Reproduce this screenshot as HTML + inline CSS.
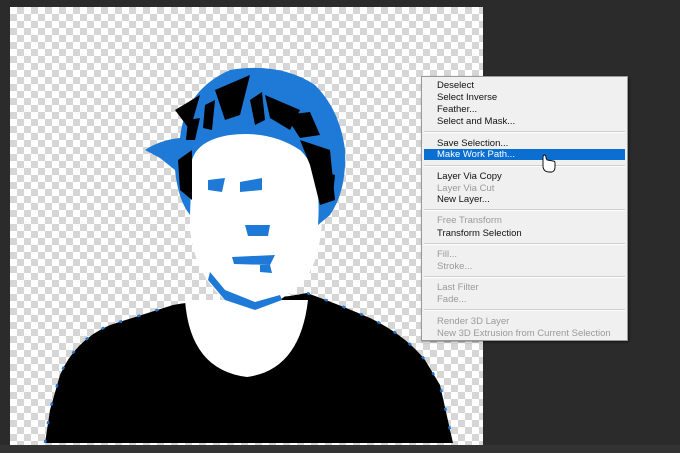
<!DOCTYPE html>
<html><head><meta charset="utf-8"><style>
html,body{margin:0;padding:0;width:680px;height:453px;overflow:hidden;background:#2b2b2b;font-family:"Liberation Sans",sans-serif}
.canvas{position:absolute;left:10px;top:7px;width:473px;height:438px;background-color:#fff;
background-image:linear-gradient(45deg,#d6d6d6 25%,transparent 25%,transparent 75%,#d6d6d6 75%),linear-gradient(45deg,#d6d6d6 25%,transparent 25%,transparent 75%,#d6d6d6 75%);
background-size:14px 14px;background-position:0 0,7px 7px}
svg{position:absolute;left:0;top:0}
.menu{position:absolute;left:421px;top:76px;width:205px;height:263px;background:#f0f0f0;border:1px solid #9a9a9a;box-shadow:1px 1px 2px rgba(0,0,0,.5)}
.it{position:absolute;left:15px;font-size:9.5px;color:#111;line-height:11px;white-space:nowrap}
.d{color:#9a9a9a}
.sep{position:absolute;left:2px;right:2px;height:1px;background:#cfcfcf;border-bottom:1px solid #fff}
.hl{position:absolute;left:2px;right:2px;top:72px;height:11px;background:#0a6fd1}
</style></head><body>
<div class="canvas"></div>
<svg width="680" height="453" viewBox="0 0 680 453">
<path d="M45 443 L50 410 L60 375 Q75 340 110 325 L173 305 Q200 300 215 303 L290 296 L307 293 Q340 305 370 318 Q405 335 425 360 L440 385 L453 443 Z" fill="#000"/>
<path d="M45 443 L50 410 L60 375 Q75 340 110 325 L173 305 M307 293 Q340 305 370 318 Q405 335 425 360 L440 385 L453 443" fill="none" stroke="#1e7ad6" stroke-width="2.5" stroke-dasharray="3 16"/>
<path d="M185 300 Q190 370 247 377 Q300 370 308 300 Z" fill="#fff"/>
<path d="M190 140 Q250 120 320 140 L322 220 Q320 265 300 285 L280 300 Q250 312 225 300 Q195 275 190 230 Z" fill="#fff"/>
<path d="M145 150 Q160 140 180 138 Q185 90 230 70 Q280 62 315 85 Q340 110 345 150 Q347 190 330 215 L318 225 Q322 170 300 150 Q270 130 230 135 Q198 140 192 160 L190 215 Q178 200 175 170 L160 158 Z" fill="#1e7ad6"/>
<path d="M175 110 L200 95 L190 130 Z M215 90 L250 75 L240 115 L225 120 Z M265 95 L300 110 L290 130 L270 118 Z M300 140 L330 150 L335 200 L320 205 L310 165 Z M178 160 L192 150 L192 200 L180 190 Z M205 105 L215 100 L212 130 L203 128 Z M250 100 L262 92 L265 120 L255 125 Z M285 115 L310 112 L320 135 L300 138 Z M320 170 L335 175 L333 195 L322 195 Z M188 120 L200 118 L195 140 L186 140 Z" fill="#000"/>
<path d="M208 180 L225 178 L222 192 L208 190 Z M240 182 L262 178 L262 190 L240 192 Z M245 225 L270 225 L268 236 L248 236 Z M232 257 L275 255 L270 265 L234 264 Z M260 265 L270 265 L272 273 L260 272 Z M210 272 L225 290 L255 302 L280 295 L282 300 L255 310 L225 300 L208 280 Z" fill="#1e7ad6"/>
<rect x="0" y="445" width="680" height="8" fill="#333"/>
</svg>
<div class="menu">
<div class="it" style="top:3px">Deselect</div>
<div class="it" style="top:15px">Select Inverse</div>
<div class="it" style="top:27px">Feather...</div>
<div class="it" style="top:39px">Select and Mask...</div>
<div class="sep" style="top:54px"></div>
<div class="it" style="top:61px">Save Selection...</div>
<div class="hl"></div>
<div class="it" style="top:72px;color:#fff">Make Work Path...</div>
<div class="sep" style="top:88px"></div>
<div class="it" style="top:94px">Layer Via Copy</div>
<div class="it d" style="top:106px">Layer Via Cut</div>
<div class="it" style="top:117px">New Layer...</div>
<div class="sep" style="top:132px"></div>
<div class="it d" style="top:138px">Free Transform</div>
<div class="it" style="top:151px">Transform Selection</div>
<div class="sep" style="top:166px"></div>
<div class="it d" style="top:172px">Fill...</div>
<div class="it d" style="top:184px">Stroke...</div>
<div class="sep" style="top:199px"></div>
<div class="it d" style="top:205px">Last Filter</div>
<div class="it d" style="top:217px">Fade...</div>
<div class="sep" style="top:232px"></div>
<div class="it d" style="top:239px">Render 3D Layer</div>
<div class="it d" style="top:251px">New 3D Extrusion from Current Selection</div>
</div>
<svg width="680" height="453" viewBox="0 0 680 453" style="pointer-events:none">
<path d="M543 158 L543 167 Q544 172 549 172 L552 172 Q555 171 555 167 L555 163 Q555 161 553 161 L547 160 L546 158 Q546 155 544.5 155 Q543 155 543 158 Z" fill="#fff" stroke="#000" stroke-width="0.9"/>
</svg>
</body></html>
